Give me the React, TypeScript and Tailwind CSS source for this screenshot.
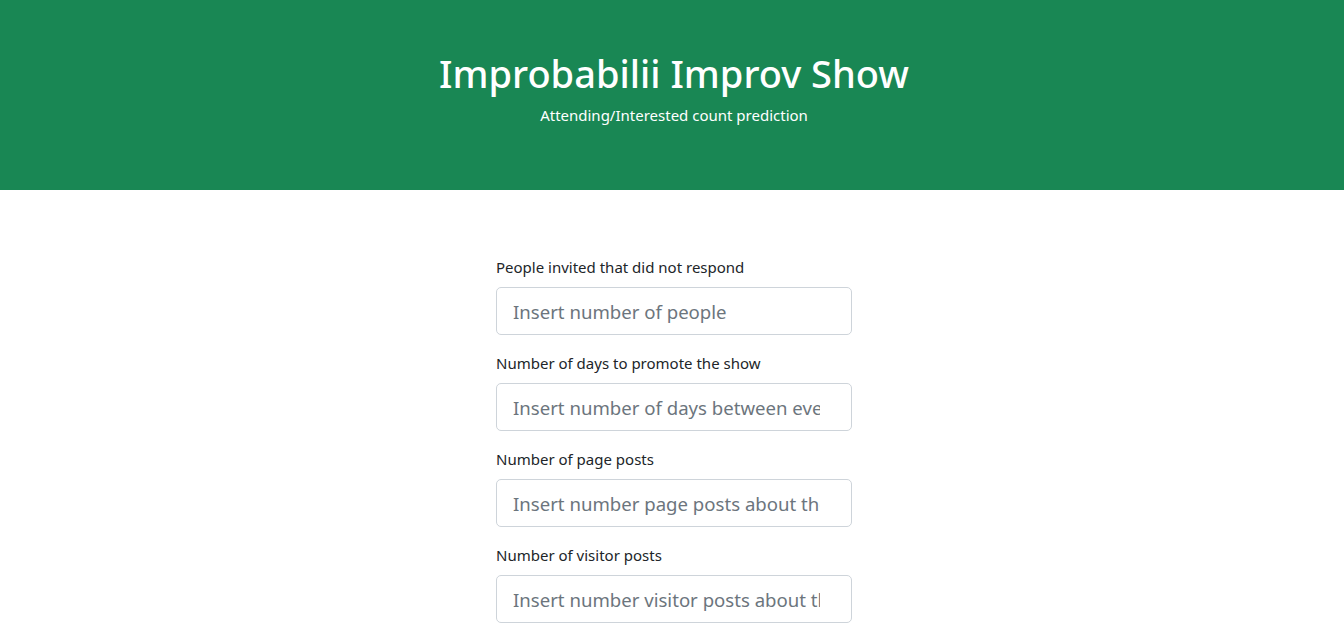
import React from "react";

const FIELDS = [
  { label: "People invited that did not respond", placeholder: "Insert number of people" },
  { label: "Number of days to promote the show", placeholder: "Insert number of days between event creation and event date" },
  { label: "Number of page posts", placeholder: "Insert number page posts about the show" },
  { label: "Number of visitor posts", placeholder: "Insert number visitor posts about the show" },
];

export default function App() {
  return (
    <div
      className="min-h-screen bg-white text-[#212529]"
      style={{ fontFamily: '"Noto Sans", "Open Sans", sans-serif' }}
    >
      <header className="bg-[#198754] text-white flex flex-col items-center pt-[49px] h-[190px] pl-[4px]">
        <h1 className="text-[38px] leading-[48px] font-medium">Improbabilii Improv Show</h1>
        <p className="text-[15px] leading-[24px] mt-[6px]">Attending/Interested count prediction</p>
      </header>
      <main className="flex flex-col items-center pt-[65px] pl-[4px]">
        <form className="w-[356px] flex flex-col">
          {FIELDS.map((f) => (
            <div key={f.label} className="mb-4 flex flex-col">
              <label className="text-[15px] leading-[24px] mb-2">{f.label}</label>
              <input
                type="number"
                placeholder={f.placeholder}
                className="h-[48px] w-full rounded-[5px] border border-[#ced4da] px-4 text-[18.6px] placeholder:text-[#6c757d] outline-none"
              />
            </div>
          ))}
        </form>
      </main>
    </div>
  );
}
